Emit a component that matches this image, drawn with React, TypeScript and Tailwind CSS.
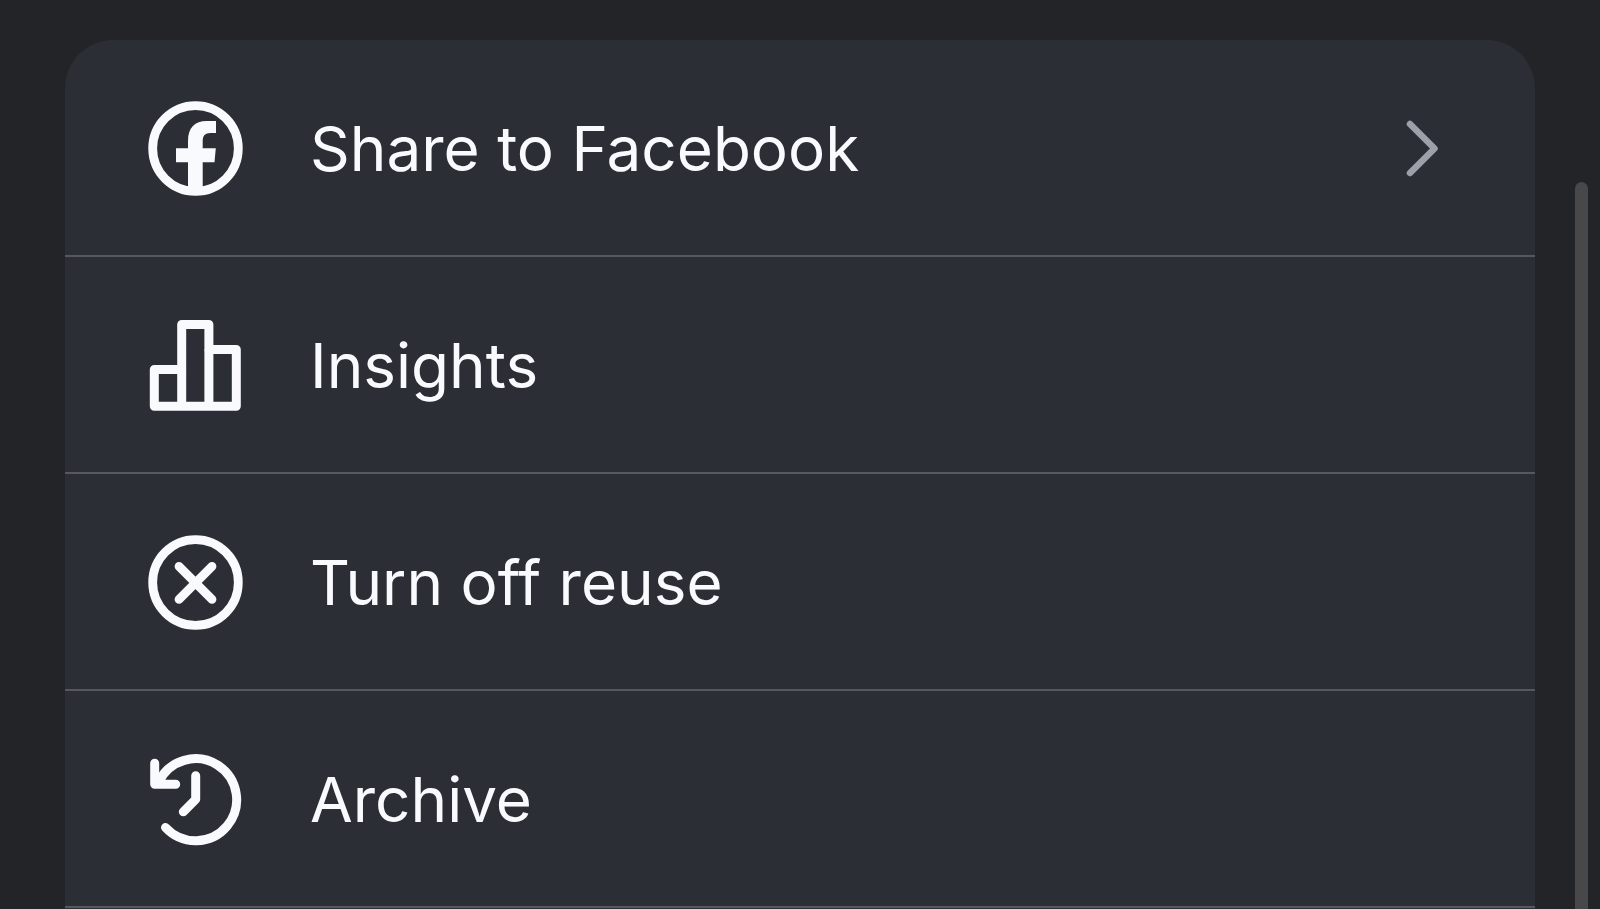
import type { ReactNode } from 'react'

interface MenuItem {
  id: string
  label: string
  icon: ReactNode
  hasSubmenu?: boolean
}

const iconClass = 'w-24 h-24 shrink-0'

function FacebookIcon() {
  return (
    <svg className={iconClass} viewBox="0 0 96 96" fill="none" aria-hidden="true">
      <circle cx="47.5" cy="48.5" r="42.8" stroke="currentColor" strokeWidth={8.8} />
      <path
        d="M40 90V62.3H28V48.3H40V41C40 27.5 47 21 58.5 21H68V33H62.5C57 33 54.7 35.7 54.7 41V48.3H67.8L66.5 62.3H54.7V90Z"
        fill="currentColor"
      />
    </svg>
  )
}

function InsightsIcon() {
  return (
    <svg className={iconClass} viewBox="0 0 96 96" fill="none" stroke="currentColor" strokeWidth={9} strokeLinejoin="round" aria-hidden="true">
      <path d="M6.3 52.5H33.7V7.5H60.9V32.5H88.3V89.3H6.3Z" />
      <path d="M33.7 52.5V89.3M60.9 32.5V89.3" />
    </svg>
  )
}

function CircleXIcon() {
  return (
    <svg className={iconClass} viewBox="0 0 96 96" fill="none" stroke="currentColor" strokeLinecap="round" aria-hidden="true">
      <circle cx="47.5" cy="48.5" r="42.8" strokeWidth={8.8} />
      <path d="M31 32.3L64 65.3M64 32.3L31 65.3" strokeWidth={8.8} />
    </svg>
  )
}

function ArchiveIcon() {
  return (
    <svg className={iconClass} viewBox="0 0 96 96" fill="none" stroke="currentColor" strokeWidth={9} strokeLinecap="round" strokeLinejoin="round" aria-hidden="true">
      <path d="M10.5 31.3A41 41 0 1 1 17.5 76.5" />
      <path d="M6.7 12.3V33.3H27.7" />
      <path d="M47.7 24.8V48.3L35.3 60.8" />
    </svg>
  )
}

const items: MenuItem[] = [
  { id: 'share', label: 'Share to Facebook', icon: <FacebookIcon />, hasSubmenu: true },
  { id: 'insights', label: 'Insights', icon: <InsightsIcon /> },
  { id: 'reuse', label: 'Turn off reuse', icon: <CircleXIcon /> },
  { id: 'archive', label: 'Archive', icon: <ArchiveIcon /> },
]

export default function App() {
  return (
    <div className="flex h-screen overflow-hidden bg-[#222427] pl-[65px] font-['Inter',sans-serif] text-[#f9fafe]">
      <main className="mt-10 min-w-0 flex-1 overflow-hidden rounded-t-[48px] bg-[#2c2e35]">
        <ul>
          {items.map((item) => (
            <li key={item.id} className="border-b-2 border-[#56585d]">
              <button
                type="button"
                className="flex h-[215px] w-full items-center gap-[66px] pl-[83px] pr-[92px] text-left text-[62px] leading-20"
              >
                {item.icon}
                <span className="flex-1 pt-0.5">{item.label}</span>
                {item.hasSubmenu && (
                  <svg className="h-16 w-10 shrink-0 text-[#9da0a9]" viewBox="0 0 40 64" fill="none" stroke="currentColor" strokeWidth={6.5} strokeLinecap="round" strokeLinejoin="round" aria-hidden="true">
                    <path d="M7 8L31.5 32.5L7 57" />
                  </svg>
                )}
              </button>
            </li>
          ))}
        </ul>
      </main>
      <div className="flex w-[65px] justify-end pr-3 pt-[182px]">
        <div className="w-[13px] rounded-t-full bg-[#48484b]" />
      </div>
    </div>
  )
}
